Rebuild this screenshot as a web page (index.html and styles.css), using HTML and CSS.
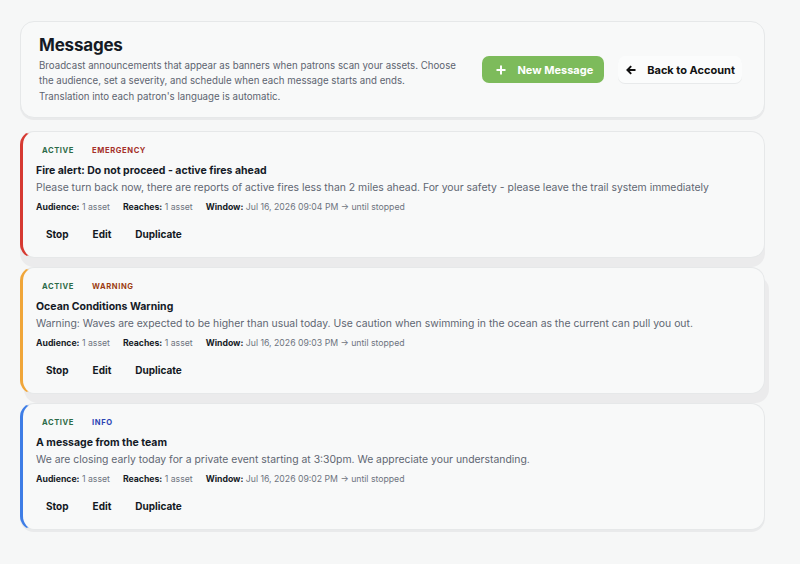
FILE: index.html
```html
<!DOCTYPE html>
<html lang="en">
  <head>
    <meta charset="UTF-8" />
    <meta name="viewport" content="width=device-width, initial-scale=1.0" />
    <title>Messages</title>
    <link rel="stylesheet" href="styles.css">
  </head>
  <body>
    <div class="page">
      <!-- Header -->
      <div class="header">
        <div class="intro">
          <h1>Messages</h1>
          <p>Broadcast announcements that appear as banners when patrons scan your assets. Choose the audience, set a severity, and schedule when each message starts and ends.<br>Translation into each patron's language is automatic.</p>
        </div>
        <div class="actions">
          <button class="btn-new">
            <svg width="10" height="10" viewBox="0 0 10 10"><path d="M5 0.5v9M0.5 5h9" stroke="#fff" stroke-width="2"/></svg>
            New Message
          </button>
          <button class="btn-back">
            <svg width="10" height="10" viewBox="0 0 10 10"><path d="M9.5 5H2M5.2 1.2L1.4 5l3.8 3.8" stroke="#111" stroke-width="1.9" fill="none"/></svg>
            Back to Account
          </button>
        </div>
      </div>

      <!-- Message list -->
      <div class="card raised emergency">
        <div class="badges"><span class="badge active">Active</span><span class="badge sev">Emergency</span></div>
        <h2>Fire alert: Do not proceed - active fires ahead</h2>
        <p class="body">Please turn back now, there are reports of active fires less than 2 miles ahead. For your safety - please leave the trail system immediately</p>
        <div class="meta">
          <span><b>Audience:</b> 1 asset</span>
          <span><b>Reaches:</b> 1 asset</span>
          <span><b>Window:</b> Jul 16, 2026 09:04 PM → until stopped</span>
        </div>
        <div class="card-actions"><button>Stop</button><button>Edit</button><button>Duplicate</button></div>
      </div>

      <div class="card raised side warning">
        <div class="badges"><span class="badge active">Active</span><span class="badge sev">Warning</span></div>
        <h2>Ocean Conditions Warning</h2>
        <p class="body">Warning: Waves are expected to be higher than usual today. Use caution when swimming in the ocean as the current can pull you out.</p>
        <div class="meta">
          <span><b>Audience:</b> 1 asset</span>
          <span><b>Reaches:</b> 1 asset</span>
          <span><b>Window:</b> Jul 16, 2026 09:03 PM → until stopped</span>
        </div>
        <div class="card-actions"><button>Stop</button><button>Edit</button><button>Duplicate</button></div>
      </div>

      <div class="card info">
        <div class="badges"><span class="badge active">Active</span><span class="badge sev">Info</span></div>
        <h2>A message from the team</h2>
        <p class="body">We are closing early today for a private event starting at 3:30pm. We appreciate your understanding.</p>
        <div class="meta">
          <span><b>Audience:</b> 1 asset</span>
          <span><b>Reaches:</b> 1 asset</span>
          <span><b>Window:</b> Jul 16, 2026 09:02 PM → until stopped</span>
        </div>
        <div class="card-actions"><button>Stop</button><button>Edit</button><button>Duplicate</button></div>
      </div>
    </div>
  </body>
</html>
```

FILE: styles.css
```css
/* Page */
body {
  margin: 0;
  background: #f6f7f7;
  font-family: Inter, "Noto Sans", sans-serif;
  color: #151a24;
}

.page {
  width: 745px;
  margin-left: 20px;
  padding-top: 21px;
}

/* Header card */
.header {
  display: flex;
  align-items: center;
  justify-content: space-between;
  height: 97px;
  box-sizing: border-box;
  padding: 0 22px 0 18px;
  background: #f8f9f9;
  border: 1px solid #e6e8e9;
  border-radius: 14px;
  box-shadow: 0 2px 0 #e9eaeb;
  margin-bottom: 13px;
}

h1 {
  font-size: 17px;
  font-weight: 700;
  margin: 0 0 3px;
  letter-spacing: -0.2px;
}

.intro p {
  margin: 0;
  width: 420px;
  font-size: 9.7px;
  line-height: 15.6px;
  color: #5d6470;
}

.actions {
  display: flex;
  align-items: center;
  gap: 14px;
  flex-shrink: 0;
}

button {
  font-family: inherit;
  cursor: pointer;
  white-space: nowrap;
}

.btn-new {
  display: flex;
  align-items: center;
  gap: 11px;
  height: 27px;
  padding: 0 11px 0 14px;
  border: none;
  border-radius: 7px;
  background: #7dbb5b;
  color: #fff;
  font-size: 11px;
  font-weight: 700;
}

.btn-back {
  display: flex;
  align-items: center;
  gap: 11px;
  height: 27px;
  padding: 0 7px 0 8px;
  border: none;
  border-radius: 7px;
  background: #fbfcfc;
  box-shadow: 0 1px 0 #e8eaeb;
  color: #111;
  font-size: 11px;
  font-weight: 700;
}

/* Message cards */
.card {
  background: #f8f9f9;
  border: 1px solid #e6e8e9;
  border-left: 3px solid #ccc;
  border-radius: 14px;
  padding: 12px 16px 0 13px;
  height: 127px;
  box-sizing: border-box;
  margin-bottom: 9px;
  box-shadow: 0 2px 0 #e9eaeb;
}

.card.raised {
  box-shadow: 0 9px 0 #ebebec;
}

.card.side {
  box-shadow: 4px 9px 0 #ebebec;
}

.emergency { border-left-color: #d63a32; }
.warning { border-left-color: #f0a63a; }
.info { border-left-color: #3e7de6; }

.badges {
  display: flex;
  gap: 6px;
}

.badge {
  padding: 2px 6px;
  font-size: 7.6px;
  font-weight: 700;
  letter-spacing: 0.6px;
  text-transform: uppercase;
}

.badge.active { color: #2d6b48; }
.emergency .sev { color: #a5302a; }
.warning .sev { color: #9c3d12; }
.info .sev { color: #2b44b4; }

h2 {
  margin: 7px 0 2px;
  font-size: 10.5px;
  line-height: 14px;
  font-weight: 700;
  color: #141a26;
}

.body {
  margin: 0;
  font-size: 10.4px;
  line-height: 16px;
  color: #5f6672;
}

.meta {
  display: flex;
  gap: 13px;
  margin-top: 6px;
  font-size: 8.7px;
  color: #6e7480;
}

.meta b {
  font-weight: 700;
  color: #161b26;
}

.card-actions {
  display: flex;
  gap: 4px;
  margin-top: 12px;
}

.card-actions button {
  border: none;
  background: transparent;
  padding: 4px 10px;
  font-size: 10px;
  font-weight: 700;
  color: #121722;
}
```
